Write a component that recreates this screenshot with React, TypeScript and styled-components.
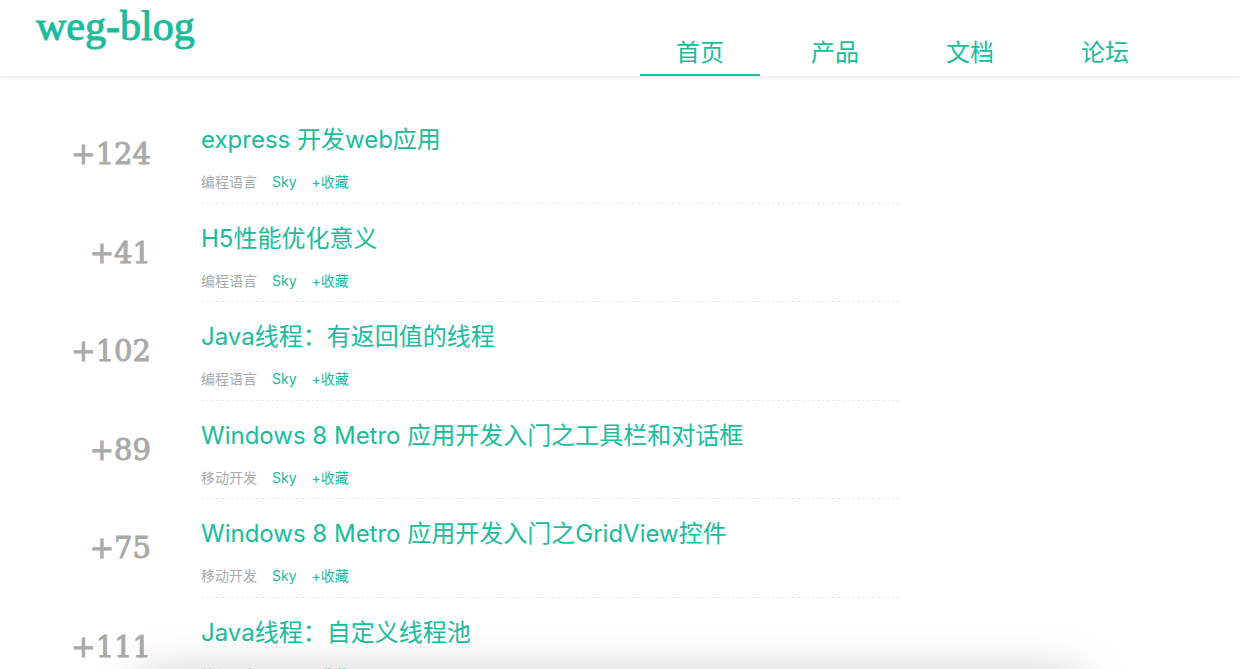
import React from "react";
import styled, { createGlobalStyle } from "styled-components";

const green = "#1abc9c";

const GlobalStyle = createGlobalStyle`
  *, *::before, *::after { box-sizing: border-box; }
  body {
    margin: 0;
    background: #fff;
    overflow-x: hidden;
    font-family: Inter, "Noto Sans CJK SC", sans-serif;
  }
`;

const Header = styled.header`
  display: grid;
  grid-template-columns: 1fr 1fr;
  height: 76px;
  box-shadow: 0 2px 2px rgba(0, 0, 0, 0.08);
`;

const Logo = styled.a`
  justify-self: start;
  padding: 4px 0 0 36px;
  color: ${green};
  font-family: "Liberation Serif", serif;
  font-size: 42px;
  line-height: 44px;
  -webkit-text-stroke: 1px ${green};
  text-decoration: none;
`;

const Nav = styled.nav`
  display: flex;
  align-items: flex-end;
  gap: 15px;
  padding-left: 20px;
`;

const NavLink = styled.a<{ $active?: boolean }>`
  flex: 0 0 120px;
  padding-bottom: 3px;
  border-bottom: 2px solid ${(p) => (p.$active ? green : "transparent")};
  color: ${green};
  font-size: 24px;
  line-height: 36px;
  text-align: center;
  text-decoration: none;
`;

const List = styled.ul`
  max-width: 900px;
  margin: 0;
  padding: 29px 0 0;
  list-style: none;
`;

const Row = styled.li`
  display: grid;
  grid-template-columns: 151px 1fr;
  column-gap: 50px;
`;

const Score = styled.div`
  align-self: center;
  color: #aaa;
  font-family: "DejaVu Serif", serif;
  font-size: 29px;
  line-height: 36px;
  -webkit-text-stroke: 1px #aaa;
  text-align: right;
`;

const Entry = styled.article`
  padding: 19px 0 12px;
  border-bottom: 1px dashed #eaeaea;
`;

const Title = styled.h2`
  margin: 0 0 17px;
  font-size: 24px;
  font-weight: 400;
  line-height: 32px;
`;

const TextLink = styled.a`
  color: ${green};
  text-decoration: none;
`;

const Meta = styled.div`
  display: flex;
  gap: 15px;
  color: #aaa;
  font-size: 14px;
  line-height: 1.25;
`;

const BottomShade = styled.div`
  position: fixed;
  right: 160px;
  bottom: -70px;
  left: 140px;
  height: 60px;
  box-shadow: 0 0 50px rgba(0, 0, 0, 0.25);
  pointer-events: none;
`;

const sections = ["首页", "产品", "文档", "论坛"];

const posts = [
  { score: 124, title: "express 开发web应用", category: "编程语言" },
  { score: 41, title: "H5性能优化意义", category: "编程语言" },
  { score: 102, title: "Java线程：有返回值的线程", category: "编程语言" },
  { score: 89, title: "Windows 8 Metro 应用开发入门之工具栏和对话框", category: "移动开发" },
  { score: 75, title: "Windows 8 Metro 应用开发入门之GridView控件", category: "移动开发" },
  { score: 111, title: "Java线程：自定义线程池", category: "编程语言" },
];

export default function App() {
  return (
    <>
      <GlobalStyle />
      <Header>
        <Logo href="#">weg-blog</Logo>
        <Nav>
          {sections.map((name, i) => (
            <NavLink key={name} href="#" $active={i === 0}>
              {name}
            </NavLink>
          ))}
        </Nav>
      </Header>
      <main>
        <List>
          {posts.map((post) => (
            <Row key={post.title}>
              <Score>+{post.score}</Score>
              <Entry>
                <Title>
                  <TextLink href="#">{post.title}</TextLink>
                </Title>
                <Meta>
                  <span>{post.category}</span>
                  <TextLink href="#">Sky</TextLink>
                  <TextLink href="#">+收藏</TextLink>
                </Meta>
              </Entry>
            </Row>
          ))}
        </List>
      </main>
      <BottomShade />
    </>
  );
}
